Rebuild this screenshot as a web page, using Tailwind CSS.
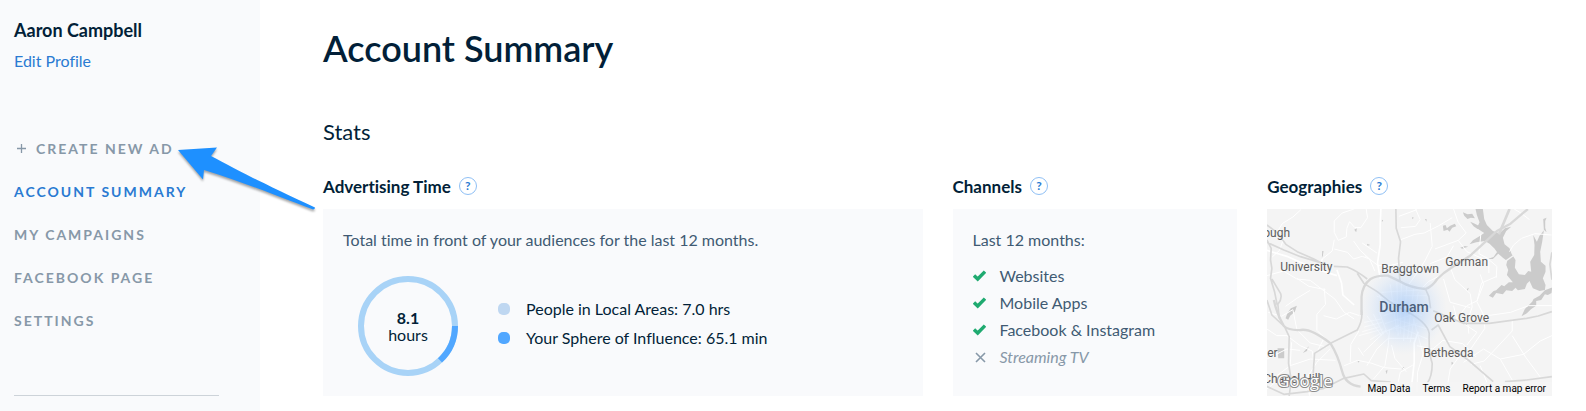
<!DOCTYPE html>
<html lang="en">
<head>
    <meta charset="UTF-8">
    <meta name="viewport" content="width=device-width, initial-scale=1.0">
    <title>Account Summary</title>
    <script src="https://cdn.jsdelivr.net/npm/@tailwindcss/browser@4"></script>
</head>
<body class="relative flex min-h-screen bg-white font-[Lato,sans-serif] text-base text-[#021f38] [font-variant-ligatures:none]">
    <aside class="w-[260px] shrink-0 bg-[#f9fafc] pl-3.5 pr-[41px] pt-[18px]">
        <p class="text-lg leading-6 font-bold">Aaron Campbell</p>
        <a href="#" class="mt-[7px] block text-base leading-6 text-[#2a7ad2]">Edit Profile</a>
        <nav class="mt-16 flex flex-col gap-5 text-sm leading-[23px] font-bold tracking-[2px] whitespace-nowrap text-[#8798a8]">
            <a href="#" class="flex items-center gap-2.5">
                <svg class="ml-[3px] h-[9px] w-[9px]" viewBox="0 0 9 9" fill="none" stroke="currentColor" stroke-width="1.3" aria-hidden="true"><path d="M4.5 0v9M0 4.5h9"/></svg>
                CREATE NEW AD
            </a>
            <a href="#" class="text-[#2a7ad2]">ACCOUNT SUMMARY</a>
            <a href="#">MY CAMPAIGNS</a>
            <a href="#">FACEBOOK PAGE</a>
            <a href="#">SETTINGS</a>
        </nav>
        <hr class="mt-[63px] border-[#cdd3d9]">
    </aside>

    <main class="min-w-0 flex-1 pt-[26px] pr-[34px] pb-[15px] pl-[63px]">
        <h1 class="text-4xl leading-[44px] font-semibold">Account Summary</h1>
        <h2 class="mt-[46px] text-[22px] leading-8">Stats</h2>

        <div class="mt-[27px] grid grid-cols-12 gap-x-[30px]">
            <section class="col-span-6 flex flex-col">
                <div class="flex h-6 items-center gap-2">
                    <h3 class="text-[17px] leading-6 font-bold">Advertising Time</h3>
                    <button type="button" aria-label="About advertising time" class="mb-0.5 h-[18px] w-[18px] rounded-full border border-[#8fc0f5] text-center text-xs leading-4 font-bold text-[#2a7ad2]">?</button>
                </div>
                <div class="mt-2.5 h-[187px] bg-[#f9fafc] px-5 pt-[19px]">
                    <p class="leading-6 text-[#405a73]">Total time in front of your audiences for the last 12 months.</p>
                    <div class="mt-6 ml-[15px] flex items-start gap-10">
                        <div class="relative h-[100px] w-[100px] shrink-0">
                            <svg viewBox="0 0 100 100" fill="none" stroke-width="6" aria-hidden="true">
                                <circle cx="50" cy="50" r="47" stroke="#a8d3f7"/>
                                <path d="M97 50A47 47 0 0 1 82 84.4" stroke="#51a7ff"/>
                            </svg>
                            <p class="absolute inset-0 flex flex-col items-center justify-center text-base leading-[17px]"><b>8.1</b>hours</p>
                        </div>
                        <ul class="space-y-[5px] pt-[21px] leading-6">
                            <li class="flex items-center gap-4"><span class="h-3 w-3 rounded-[5px] bg-[#bfd7f1]"></span>People in Local Areas: 7.0 hrs</li>
                            <li class="flex items-center gap-4"><span class="h-3 w-3 rounded-[5px] bg-[#51a7ff]"></span>Your Sphere of Influence: 65.1 min</li>
                        </ul>
                    </div>
                </div>
            </section>

            <section class="col-span-3 flex flex-col">
                <div class="flex h-6 items-center gap-2">
                    <h3 class="text-[17px] leading-6 font-bold">Channels</h3>
                    <button type="button" aria-label="About channels" class="mb-0.5 h-[18px] w-[18px] rounded-full border border-[#8fc0f5] text-center text-xs leading-4 font-bold text-[#2a7ad2]">?</button>
                </div>
                <div class="mt-2.5 h-[187px] bg-[#f9fafc] px-5 pt-[19px] text-[#405a73]">
                    <p class="leading-6">Last 12 months:</p>
                    <ul class="mt-3 space-y-1 leading-[23px]">
                        <li class="flex items-center gap-3.5">
                            <svg class="h-[13px] w-[13px]" viewBox="0 0 13 13" fill="none" stroke="#1faa70" stroke-width="3.4" aria-hidden="true"><path d="M1 6.5l3.7 3.500L12 2.600"/></svg>
                            Websites
                        </li>
                        <li class="flex items-center gap-3.5">
                            <svg class="h-[13px] w-[13px]" viewBox="0 0 13 13" fill="none" stroke="#1faa70" stroke-width="3.4" aria-hidden="true"><path d="M1 6.5l3.7 3.500L12 2.600"/></svg>
                            Mobile Apps
                        </li>
                        <li class="flex items-center gap-3.5">
                            <svg class="h-[13px] w-[13px]" viewBox="0 0 13 13" fill="none" stroke="#1faa70" stroke-width="3.4" aria-hidden="true"><path d="M1 6.5l3.7 3.500L12 2.600"/></svg>
                            Facebook &amp; Instagram
                        </li>
                        <li class="flex items-center gap-3.5 text-[#8798a8] italic">
                            <svg class="h-[13px] w-[13px]" viewBox="0 0 13 13" fill="none" stroke="currentColor" stroke-width="1.6" aria-hidden="true"><path d="M3 3l9 9M12 3L3 12"/></svg>
                            Streaming TV
                        </li>
                    </ul>
                </div>
            </section>

            <section class="col-span-3 flex flex-col">
                <div class="flex h-6 items-center gap-2">
                    <h3 class="text-[17px] leading-6 font-bold">Geographies</h3>
                    <button type="button" aria-label="About geographies" class="mb-0.5 h-[18px] w-[18px] rounded-full border border-[#8fc0f5] text-center text-xs leading-4 font-bold text-[#2a7ad2]">?</button>
                </div>
                <div class="relative mt-2.5 h-[187px] overflow-hidden bg-[#f4f4f4] font-[Roboto,sans-serif] text-xs leading-4 whitespace-nowrap text-[#5c5c5c]">
                    <svg class="h-full w-full" viewBox="0 0 855 561" preserveAspectRatio="xMidYMid slice" fill="none" stroke-linejoin="round" aria-hidden="true">
                        <defs>
                            <radialGradient id="glow">
                                <stop offset="0" stop-color="#9cc4f8" stop-opacity=".7"/>
                                <stop offset=".5" stop-color="#b0d0fa" stop-opacity=".4"/>
                                <stop offset="1" stop-color="#cfe2fb" stop-opacity="0"/>
                            </radialGradient>
                        </defs>
                        <!-- water -->
                        <g fill="#cbcbcb">
                            <path transform="translate(518 -12)" d="M108 12L130 12 134 42 142 60 160 78 180 85 196 70 215 65 200 78 190 98 195 118 210 130 216 146 228 165 226 188 238 208 256 210 266 198 275 200 272 170 284 150 285 120 281 90 292 110 300 92 313 76 308 110 302 140 304 170 318 182 318 200 310 220 318 240 316 255 300 258 280 250 270 228 262 236 256 252 235 256 228 248 218 258 200 256 190 268 170 264 160 278 148 272 162 258 170 256 186 240 194 244 208 232 220 232 202 210 206 195 200 180 203 168 190 158 176 146 164 130 150 116 136 108 110 112 90 118 100 106 122 92 134 84 112 70 120 52 112 30Z"/>
                            <path transform="translate(518 -12)" d="M338 247L336 264 325 270 316 268 305 285 290 288 290 302 275 312 262 325 246 334 256 312 278 290 282 282 300 272 316 256ZM70 22l14 6 14-2 8 14-12-2-10 4-10-10zM92 50l14 6 14 8-6 8-12-8zM10 62l8-2 4 10 10-8 14-6 4 8-12 4-8 12-6-6-12 4zM62 128l14-5 10 2-10 3-8 3zM144 162l18-6 10-14 12-4-14 14-10 10z"/>
                            <path d="M72 298l18-8-6 18-14 12-6 12-8-4 6-16zM118 420l8-8-6 14-12 6zM32 418h20v30H34zM166 126h4l-2 14-3 6zM262 62l8-4-2 12zM345 32l4 2-4 6zM436 24l5 2-5 5zM474 30h5v8zM600 240l6-4-4 10zM590 338l12 10-8-2zM356 486l6-4-2 14zM406 474l6 0-4 8zM272 456h6l-2 5zM554 458l6 4-6 6zM829 30l10-4-4 10 0 20 4 14-8-8zM300 104l10 4-8 2z"/>
                        </g>
                        <path d="M714 158l28-20" stroke="#f4f4f4" stroke-width="4"/>
                        <!-- local streets -->
                        <g stroke="#fff" stroke-width="3">
                            <path d="M102 2l-24 22-32 20-16 26M396 22l54-20M298 0l4 26-20 30-18 0-16-18-8 20-2 26-24 10-12-24 0-34 24-24 30-10 22-10M202 92l-6 34-30 24-12 24-32 0M166 150l-2 36M202 120l40 10 18 20 26-8 22 8M260 96l20 28 28 26 16 36M402 92l42-16 28-4 44-22 40-24M490 42l6 70-22 44-32 48-20 28M446 0l14 32-14 20-44 4M560 0l14 40 24 32-24 22-70 26M574 94l26 34 54 24M560 110l-20 34-50 20M330 132l-44-30M408 160l-40 10-34 0-40-30M642 74l-6 60 30 16 0 42M666 152l24 20-2 34M640 196l10 30-20 50-30 14-34 44M550 174l14 38 46 42 6 40-14 40 4 40M690 202l-46 20-14 56 20 40 4 40-44 64M524 198l-40 20-24 24M530 210l20 70 60 16M560 290l10 40 60 40-30 38M736 330l0 36-84 90-40 10M855 290l-70 0-54 20-70 10"/>
                            <path d="M342 0l-2 46 0 60-8 56 8 46" stroke-width="5"/>
                            <path d="M728 128l12-20 24-20 40-14 50 4M742 0l20 12 26 20M0 200l50-14 40 24 40 4 34 26 40 30 28 40 30 20M50 90l-12 34-22 20M4 310l40 12 34-20 12 60 40 40 50 12M130 244l-40 24-34 24M60 380l40 30 36 16 6 40M70 470l60-20 76 4M172 238l4 48-26 30 0 48 22 22-20 40M0 360l30 20 40 0M0 450l60-30 40 4M30 500l40-30 4-70M170 320l38 10 40-20 30 10M176 242l-50-10-36-24M190 420l-40 40-30 46 10 50M232 470l40-16 40 8 40 14 50 4M276 366l-24 40-2 54M290 430l30-30 32-30 46-22M290 440l-16-24M300 470l30-50 34-32 80 0M320 510l34-40 10-60 4-50M418 488l-34-40-10-40M390 540l10-50 38-22M450 410l48 10 30-26 60 10 40 40M470 430l-18 60-2 60M540 540l10-60 36-50M590 460l60-40 50 30 40 70M700 450l70-14 50-40 35-16M736 380l40 64 44 60M640 470l20 50-40 20M0 540l50-40 40 14M128 560l-8-40"/>
                            <path d="M432 550l10-90 0-58 12-34M210 182l14 40 4 36 34 30M0 124l60 18 40 18 60 24 50 16" stroke-width="5"/>
                            <path stroke-width="2" d="M292 340l50-10M292 354l54-14M286 368l50-14M300 320l44 60M320 316l30 60M336 306l26 70M276 380l72-20M310 392l50-30M334 250l20 50M340 300l60-16M350 320l70-22M354 344l80-26M362 364l90-20M370 226l20 140M390 220l4 160M404 216l-4 160M420 226l-10 170M440 240l-18 150M454 250l-24 150M330 262l140 40M336 280l130 40M344 250l130-8M410 260l70 0M382 330l100 30M386 350l96 40M440 330l30 110"/>
                        </g>
                        <!-- highways -->
                        <g stroke="#d8d8d8" stroke-width="5">
                            <path transform="translate(-9 -12)" d="M9 112L60 135 110 155 180 176M9 60L39 82 66 118 100 140 150 162 180 178M210 184L250 186Q280 198 310 222M396 12L397 70 410 110 404 160 408 228M280 205L300 235 340 260 380 292 440 326M9 105L22 130 20 165 24 190 20 220 32 260 40 300M24 222L50 265Q56 280 42 298L46 340M485 252L495 275 500 310"/>
                            <path transform="translate(-9 -12)" stroke-width="7" d="M293 330V275Q296 240 320 222Q340 210 372 212L410 230Q440 248 485 252Q505 245 520 222L540 204 569 184 619 152 669 106 699 78 740 56 792 12"/>
                            <path transform="translate(-9 273)" stroke-width="7" d="M30 0Q38 40 60 78Q75 92 110 90Q140 84 200 130Q222 165 235 215Q245 255 290 260"/>
                            <path transform="translate(-9 273)" d="M293 30Q298 60 280 90L200 130 152 160 148 220M62 80L76 110 74 190 82 240 76 288M420 30Q490 65 496 100Q494 160 505 190Q505 230 490 250M180 265L240 235 300 222 322 242 380 246M0 255L60 283 130 275 180 265M9 0L24 45 62 80"/>
                            <path transform="translate(-21 213)" d="M515 150L535 135 570 200 625 240 700 305M520 92L610 130 688 130 800 115 835 108 876 95M735 305L800 300 876 290"/>
                            <path d="M728 0l-32 76" stroke-width="8"/>
                            <path d="M855 130l-6 36 6 46"/>
                        </g>
                        <ellipse cx="410" cy="300" rx="130" ry="138" fill="url(#glow)"/>
                    </svg>
                    <span class="absolute top-4 -left-1">ough</span>
                    <span class="absolute top-[50px] left-[13px]">University</span>
                    <span class="absolute top-[52px] left-[114px]">Braggtown</span>
                    <span class="absolute top-[45px] left-[178px]">Gorman</span>
                    <span class="absolute top-[89px] left-[112px] text-sm leading-[18px] font-medium text-[#4c5f7a]">Durham</span>
                    <span class="absolute top-[101px] left-[167px]">Oak Grove</span>
                    <span class="absolute top-[136px] left-[156px]">Bethesda</span>
                    <span class="absolute top-[136px] left-0">er</span>
                    <span class="absolute top-[162px] -left-1">Chapel Hill</span>
                    <svg class="absolute bottom-0 left-2 h-7 w-[62px]" viewBox="0 0 62 28" role="img" aria-label="Google">
                        <text x="2" y="19" font-family="Open Sans, sans-serif" font-size="17" fill="#fff" stroke="#8b8b8b" stroke-width="2" paint-order="stroke">Google</text>
                    </svg>
                    <div class="absolute right-0 bottom-0 flex h-3.5 gap-3 bg-[#f5f5f5]/80 pr-1.5 pl-1 text-[10px] leading-3.5 text-black">
                        <button type="button">Map Data</button>
                        <a href="#">Terms</a>
                        <a href="#">Report a map error</a>
                    </div>
                </div>
            </section>
        </div>
    </main>

    <!-- pointer to the create link -->
    <svg class="pointer-events-none absolute top-[143px] left-[174px] h-[74px] w-[146px] drop-shadow-[0_2px_1px_rgba(0,0,0,0.35)]" viewBox="0 0 146 74" aria-hidden="true">
        <path d="M4 7L43 4.500 37 13C63 27 98 45 141 64.500Q141 66.500 139 66.500C98 51 66 38 30 27L29 36.500Z" fill="#1e90ff"/>
    </svg>
</body>
</html>
